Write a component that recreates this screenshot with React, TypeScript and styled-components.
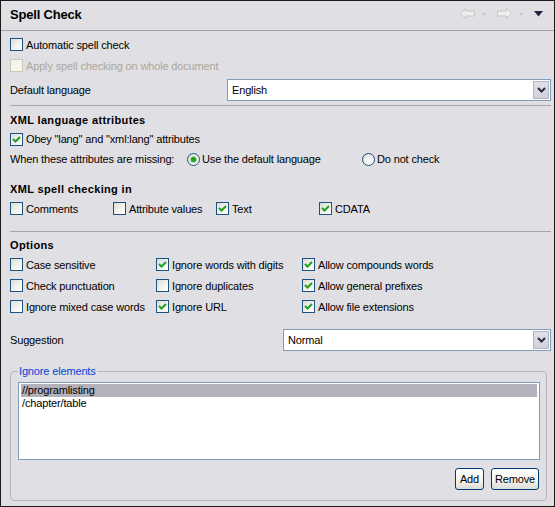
import React from 'react'
import styled, { createGlobalStyle } from 'styled-components'

const GlobalStyle = createGlobalStyle`
  html, body {
    margin: 0;
    padding: 0;
    background: #e0dfe3;
  }
  * {
    box-sizing: border-box;
  }
`

const Panel = styled.div`
  width: 555px;
  height: 507px;
  border: 1px solid #1b1b1b;
  background: #e0dfe3;
  font-family: 'Liberation Sans', Arial, sans-serif;
  font-size: 11px;
  letter-spacing: -0.15px;
  color: #000;
  display: flex;
  flex-direction: column;
  overflow: hidden;
`

const TitleBar = styled.div`
  height: 30px;
  flex: none;
  display: flex;
  align-items: center;
  justify-content: space-between;
  padding: 0 11px 0 9px;
  border-bottom: 1px solid #a3a2a8;
`

const Title = styled.div`
  font-size: 13px;
  font-weight: bold;
  letter-spacing: -0.2px;
  margin-top: -2px;
`

const ToolGroup = styled.div`
  display: flex;
  align-items: center;
  margin-top: -3px;
`

const Body = styled.div`
  flex: 1;
  display: flex;
  flex-direction: column;
  padding: 3px 3px 0 9px;
`

const Row = styled.div<{ $h?: number; $mt?: number }>`
  height: ${p => p.$h ?? 21}px;
  margin-top: ${p => p.$mt ?? 0}px;
  display: flex;
  align-items: center;
  flex: none;
`

const Grid = styled.div<{ $col: number; $mt?: number }>`
  display: grid;
  grid-template-columns: repeat(3, ${p => p.$col}px) 1fr;
  grid-auto-rows: 21px;
  margin-top: ${p => p.$mt ?? 0}px;
  align-items: center;
  flex: none;
`

const Separator = styled.div<{ $mt: number }>`
  height: 1px;
  background: #a7a6ab;
  margin-top: ${p => p.$mt}px;
  flex: none;
`

const Heading = styled.div<{ $mt?: number }>`
  height: 19px;
  margin-top: ${p => p.$mt ?? 0}px;
  display: flex;
  align-items: center;
  font-weight: bold;
  letter-spacing: 0.35px;
  flex: none;
`

const Label = styled.span<{ $disabled?: boolean }>`
  color: ${p => (p.$disabled ? '#aca899' : '#000')};
  white-space: nowrap;
`

const FieldLabel = styled.span<{ $w?: number }>`
  width: ${p => (p.$w ? `${p.$w}px` : 'auto')};
  flex: ${p => (p.$w ? 'none' : '1')};
  white-space: nowrap;
`

const CheckItem = styled.label`
  display: flex;
  align-items: center;
  gap: 3px;
`

const Box = styled.span<{ $disabled?: boolean }>`
  width: 13px;
  height: 13px;
  flex: none;
  border: 1px solid ${p => (p.$disabled ? '#cac8bb' : '#1c5180')};
  background: ${p =>
    p.$disabled ? '#f5f4ea' : 'linear-gradient(135deg, #dcdcd7 0%, #f4f4f1 60%, #ffffff 100%)'};
  display: flex;
  align-items: center;
  justify-content: center;
`

const RadioCircle = styled.span`
  width: 13px;
  height: 13px;
  flex: none;
  border-radius: 50%;
  border: 1px solid #1c5180;
  background: radial-gradient(circle at 65% 65%, #ffffff 0%, #eeeeea 50%, #d4d4ce 100%);
  display: flex;
  align-items: center;
  justify-content: center;
`

const RadioDot = styled.span`
  width: 5px;
  height: 5px;
  border-radius: 50%;
  background: #21a121;
  box-shadow: 0 0 0 1px #9fdb9f;
`

const RadioItem = styled.label<{ $w?: number }>`
  width: ${p => (p.$w ? `${p.$w}px` : 'auto')};
  display: flex;
  align-items: center;
  gap: 2px;
`

const Combo = styled.div<{ $w: number }>`
  width: ${p => p.$w}px;
  height: 22px;
  flex: none;
  border: 1px solid #7f9db9;
  background: #fff;
  display: flex;
  align-items: center;
  padding: 1px 1px 1px 4px;
`

const ComboText = styled.span`
  flex: 1;
`

const ComboButton = styled.span`
  width: 16px;
  height: 18px;
  border: 1px solid #b3b5c3;
  background: linear-gradient(#dfe0e8, #cfd1dc);
  display: flex;
  align-items: center;
  justify-content: center;
`

const Group = styled.fieldset`
  margin: 14px 4px 0 0;
  padding: 4px 6px 10px 7px;
  border: 1px solid #b7b6bc;
  border-radius: 4px;
  min-width: 0;
  flex: none;
`

const Legend = styled.legend`
  color: #0046d5;
  padding: 0 1px;
  margin-left: 0;
  line-height: 13px;
`

const ListBox = styled.div`
  height: 78px;
  border: 1px solid #7f9db9;
  background: #fff;
  padding: 1px 2px;
`

const ListRow = styled.div<{ $selected?: boolean }>`
  height: 13px;
  line-height: 13px;
  padding-left: 1px;
  background: ${p => (p.$selected ? '#b2b1bc' : 'transparent')};
`

const ButtonBar = styled.div`
  display: flex;
  justify-content: flex-end;
  gap: 7px;
  margin-top: 8px;
  padding-right: 1px;
`

const Button = styled.button`
  font: inherit;
  letter-spacing: inherit;
  height: 22px;
  padding: 0 3px;
  min-width: 29px;
  border: 1px solid #003c74;
  border-radius: 3px;
  background: linear-gradient(#ffffff 0%, #f3f3ef 60%, #dcdbd5 100%);
  color: #000;
`

const CheckMark = () => (
  <svg width="9" height="9" viewBox="0 0 9 9">
    <polyline points="1,4 3.5,6.5 8,2" fill="none" stroke="#21a121" strokeWidth="2" />
  </svg>
)

const Checkbox: React.FC<{ label: string; checked?: boolean; disabled?: boolean }> = ({
  label,
  checked,
  disabled
}) => (
  <CheckItem>
    <Box $disabled={disabled}>{checked && <CheckMark />}</Box>
    <Label $disabled={disabled}>{label}</Label>
  </CheckItem>
)

const Radio: React.FC<{ label: string; checked?: boolean; w?: number }> = ({ label, checked, w }) => (
  <RadioItem $w={w}>
    <RadioCircle>{checked && <RadioDot />}</RadioCircle>
    <Label>{label}</Label>
  </RadioItem>
)

const Chevron = () => (
  <svg width="9" height="6" viewBox="0 0 9 6">
    <polyline points="1,1 4.5,4.5 8,1" fill="none" stroke="#2c2c3c" strokeWidth="2" />
  </svg>
)

const DropDown: React.FC<{ value: string; w: number }> = ({ value, w }) => (
  <Combo $w={w}>
    <ComboText>{value}</ComboText>
    <ComboButton>
      <Chevron />
    </ComboButton>
  </Combo>
)

const NavArrow: React.FC<{ dir: 'left' | 'right' }> = ({ dir }) => (
  <svg width="15" height="11" viewBox="0 0 15 11" style={{ transform: dir === 'right' ? 'scaleX(-1)' : undefined }}>
    <path d="M0.5 5.5 L5.5 0.5 L5.5 3 L14.5 3 L14.5 8 L5.5 8 L5.5 10.5 Z" fill="#efefec" stroke="#c7c6c1" />
  </svg>
)

const SmallTriangle: React.FC<{ color: string; w: number; mr: number }> = ({ color, w, mr }) => (
  <svg width={w} height={w / 2 + 1} viewBox={`0 0 ${w} ${w / 2 + 1}`} style={{ marginRight: mr }}>
    <path d={`M0 0 L${w} 0 L${w / 2} ${w / 2 + 1} Z`} fill={color} />
  </svg>
)

export default function App() {
  return (
    <>
      <GlobalStyle />
      <Panel>
        <TitleBar>
          <Title>Spell Check</Title>
          <ToolGroup>
            <span style={{ marginRight: 7 }}>
              <NavArrow dir="left" />
            </span>
            <SmallTriangle color="#c9c8c4" w={4} mr={11} />
            <span style={{ marginRight: 7 }}>
              <NavArrow dir="right" />
            </span>
            <SmallTriangle color="#c9c8c4" w={4} mr={11} />
            <SmallTriangle color="#23234a" w={9} mr={0} />
          </ToolGroup>
        </TitleBar>
        <Body>
          <Row>
            <Checkbox label="Automatic spell check" />
          </Row>
          <Row>
            <Checkbox label="Apply spell checking on whole document" disabled />
          </Row>
          <Row $h={22} $mt={3}>
            <FieldLabel>Default language</FieldLabel>
            <DropDown value="English" w={324} />
          </Row>
          <Separator $mt={4} />

          <Heading $mt={4}>XML language attributes</Heading>
          <Row $h={20}>
            <Checkbox label={'Obey "lang" and "xml:lang" attributes'} checked />
          </Row>
          <Row $h={20}>
            <FieldLabel $w={177}>When these attributes are missing:</FieldLabel>
            <Radio label="Use the default language" checked w={175} />
            <Radio label="Do not check" />
          </Row>

          <Heading $mt={10}>XML spell checking in</Heading>
          <Grid $col={103}>
            <Checkbox label="Comments" />
            <Checkbox label="Attribute values" />
            <Checkbox label="Text" checked />
            <Checkbox label="CDATA" checked />
          </Grid>
          <Separator $mt={12} />

          <Heading $mt={3}>Options</Heading>
          <Grid $col={146}>
            <Checkbox label="Case sensitive" />
            <Checkbox label="Ignore words with digits" checked />
            <Checkbox label="Allow compounds words" checked />
            <span />
            <Checkbox label="Check punctuation" />
            <Checkbox label="Ignore duplicates" />
            <Checkbox label="Allow general prefixes" checked />
            <span />
            <Checkbox label="Ignore mixed case words" />
            <Checkbox label="Ignore URL" checked />
            <Checkbox label="Allow file extensions" checked />
            <span />
          </Grid>

          <Row $h={22} $mt={12}>
            <FieldLabel>Suggestion</FieldLabel>
            <DropDown value="Normal" w={268} />
          </Row>

          <Group>
            <Legend>Ignore elements</Legend>
            <ListBox>
              <ListRow $selected>//programlisting</ListRow>
              <ListRow>/chapter/table</ListRow>
            </ListBox>
            <ButtonBar>
              <Button>Add</Button>
              <Button>Remove</Button>
            </ButtonBar>
          </Group>
        </Body>
      </Panel>
    </>
  )
}
